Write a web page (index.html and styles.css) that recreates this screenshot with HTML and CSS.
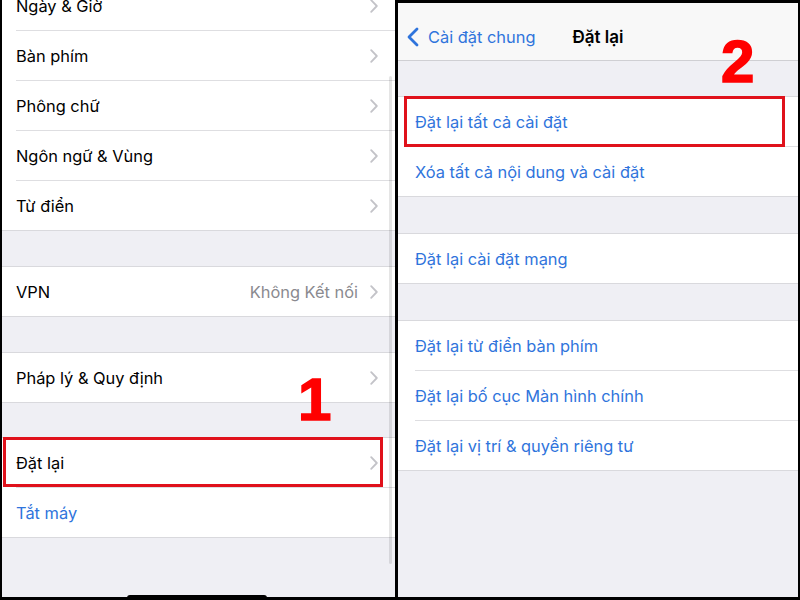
FILE: index.html
```html
<!DOCTYPE html>
<html lang="vi">
<head>
<meta charset="utf-8">
<title>Đặt lại</title>
<link rel="stylesheet" href="styles.css">
</head>
<body>
<div class="screen">
  <section class="pane pane-left">
    <div class="list list-scrolled">
      <div class="group">
        <div class="row"><div class="cell"><span class="label">Ngày &amp; Giờ</span><svg class="chev" viewBox="0 0 8 14"><path d="M1.2 1.2L6.8 7l-5.6 5.8"/></svg></div></div>
        <div class="row"><div class="cell"><span class="label">Bàn phím</span><svg class="chev" viewBox="0 0 8 14"><path d="M1.2 1.2L6.8 7l-5.6 5.8"/></svg></div></div>
        <div class="row"><div class="cell"><span class="label">Phông chữ</span><svg class="chev" viewBox="0 0 8 14"><path d="M1.2 1.2L6.8 7l-5.6 5.8"/></svg></div></div>
        <div class="row"><div class="cell"><span class="label">Ngôn ngữ &amp; Vùng</span><svg class="chev" viewBox="0 0 8 14"><path d="M1.2 1.2L6.8 7l-5.6 5.8"/></svg></div></div>
        <div class="row"><div class="cell"><span class="label">Từ điển</span><svg class="chev" viewBox="0 0 8 14"><path d="M1.2 1.2L6.8 7l-5.6 5.8"/></svg></div></div>
      </div>
      <div class="gap"></div>
      <div class="group">
        <div class="row"><div class="cell"><span class="label">VPN</span><span class="detail">Không Kết nối</span><svg class="chev" viewBox="0 0 8 14"><path d="M1.2 1.2L6.8 7l-5.6 5.8"/></svg></div></div>
      </div>
      <div class="gap"></div>
      <div class="group">
        <div class="row"><div class="cell"><span class="label">Pháp lý &amp; Quy định</span><svg class="chev" viewBox="0 0 8 14"><path d="M1.2 1.2L6.8 7l-5.6 5.8"/></svg></div></div>
      </div>
      <div class="gap gap-sm"></div>
      <div class="group">
        <div class="row marked marked-left"><div class="cell"><span class="label">Đặt lại</span><svg class="chev" viewBox="0 0 8 14"><path d="M1.2 1.2L6.8 7l-5.6 5.8"/></svg></div></div>
        <div class="row"><div class="cell"><span class="label action">Tắt máy</span></div></div>
      </div>
    </div>
    <div class="scrollbar"></div>
  </section>

  <section class="pane pane-right">
    <header class="navbar">
      <div class="back">
        <svg class="back-chev" viewBox="0 0 12 20"><path d="M10 2L2 10l8 8"/></svg>
        <span class="back-label">Cài đặt chung</span>
      </div>
      <h1 class="title">Đặt lại</h1>
      <div></div>
    </header>
    <div class="list list-right">
      <div class="group">
        <div class="row marked marked-right"><div class="cell"><span class="label action">Đặt lại tất cả cài đặt</span></div></div>
        <div class="row"><div class="cell"><span class="label action">Xóa tất cả nội dung và cài đặt</span></div></div>
      </div>
      <div class="gap gap-lg"></div>
      <div class="group">
        <div class="row"><div class="cell"><span class="label action">Đặt lại cài đặt mạng</span></div></div>
      </div>
      <div class="gap gap-lg"></div>
      <div class="group">
        <div class="row"><div class="cell"><span class="label action">Đặt lại từ điển bàn phím</span></div></div>
        <div class="row"><div class="cell"><span class="label action">Đặt lại bố cục Màn hình chính</span></div></div>
        <div class="row"><div class="cell"><span class="label action">Đặt lại vị trí &amp; quyền riêng tư</span></div></div>
      </div>
    </div>
  </section>

  <div class="step step-1">1</div>
  <div class="step step-2">2</div>
  <div class="home-indicator"></div>
</div>
</body>
</html>
```

FILE: styles.css
```css
*, *::before, *::after { box-sizing: border-box; }

html, body {
  margin: 0;
  padding: 0;
  background: #000;
}

.screen {
  position: relative;
  width: 800px;
  height: 600px;
  background: #000;
  display: flex;
  gap: 3px;
  padding: 0 2px 3px 2px;
  overflow: hidden;
  font-family: Inter, "Liberation Sans", "Noto Sans", sans-serif;
  -webkit-font-smoothing: antialiased;
}

.pane {
  position: relative;
  background: #efeff4;
  overflow: hidden;
}

.pane-left {
  width: 393px;
}

.pane-right {
  width: 400px;
  margin-top: 3px;
}

.list-scrolled {
  margin-top: -20px;
}

.group {
  background: #fff;
  border-top: 1px solid #d9d9dd;
  border-bottom: 1px solid #d9d9dd;
}

.row {
  position: relative;
  height: 50px;
  display: flex;
}

.row:last-child {
  height: 49px;
}

.pane-left .row {
  padding-left: 14px;
}

.pane-right .row {
  padding-left: 17px;
}

.cell {
  flex: 1;
  display: flex;
  align-items: center;
  border-bottom: 1px solid #dedee1;
  padding-right: 17px;
}

.row:last-child .cell {
  border-bottom: none;
}

.label {
  flex: 1;
  font-size: 16.4px;
  color: #000;
  white-space: nowrap;
}

.label.action {
  color: #2f74dc;
}

.detail {
  font-size: 16.4px;
  color: #8a8a8f;
  margin-right: 12px;
}

.chev {
  width: 8px;
  height: 14px;
  flex: none;
}

.chev path {
  fill: none;
  stroke: #c3c3c8;
  stroke-width: 1.8;
  stroke-linecap: round;
  stroke-linejoin: round;
}

.gap {
  height: 35px;
}

.gap-sm {
  height: 34px;
}

.gap-lg {
  height: 36px;
}

.scrollbar {
  position: absolute;
  left: 387px;
  top: 76px;
  width: 3px;
  height: 488px;
  border-radius: 2px;
  background: rgba(0, 0, 0, 0.1);
}

/* navigation bar */
.navbar {
  height: 58px;
  background: #f8f8f8;
  border-bottom: 1px solid #cfcfd3;
  display: grid;
  grid-template-columns: 1fr auto 1fr;
  align-items: center;
  padding-top: 11px;
}

.back {
  display: flex;
  align-items: center;
  gap: 9px;
  margin-left: 9px;
}

.back-chev {
  width: 12px;
  height: 20px;
  flex: none;
}

.back-chev path {
  fill: none;
  stroke: #2f74dc;
  stroke-width: 2.8;
  stroke-linecap: round;
  stroke-linejoin: round;
}

.back-label {
  font-size: 16.4px;
  color: #2f74dc;
  white-space: nowrap;
}

.title {
  margin: 0;
  font-size: 17px;
  font-weight: 600;
  color: #000;
}

.list-right {
  padding-top: 35px;
}

/* red highlight boxes */
.marked::after {
  content: "";
  position: absolute;
  border: 3px solid #e0111b;
  top: -1px;
  height: 50px;
}

.marked-left::after {
  left: 1px;
  right: 12px;
}

.marked-right::after {
  left: 6px;
  right: 13px;
  height: 51px;
}

/* step numbers */
.step {
  position: absolute;
  font-family: "Liberation Sans", Arial, sans-serif;
  font-weight: 700;
  font-size: 60px;
  line-height: 60px;
  color: #ff0000;
  -webkit-text-stroke: 1.6px #ff0000;
}

.step-1 {
  left: 298px;
  top: 370px;
}

.step-2 {
  left: 721px;
  top: 32px;
}

.home-indicator {
  position: absolute;
  left: 127px;
  bottom: 0;
  width: 140px;
  height: 5px;
  border-radius: 3px 3px 0 0;
  background: #000;
}
```
